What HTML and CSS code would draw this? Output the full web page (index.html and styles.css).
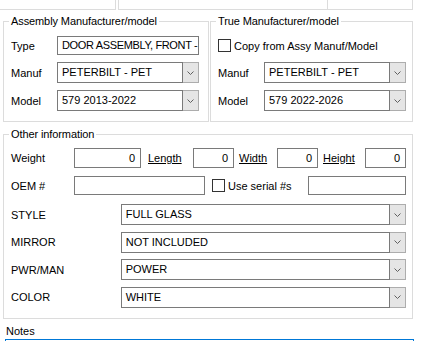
FILE: index.html
```html
<!DOCTYPE html>
<html>
<head>
	<meta charset="UTF-8">
	<title>Part details</title>
	<link rel="stylesheet" href="styles.css">
</head>
<body>
	<!--bottom of the panels above-->
	<div class="top">
		<div class="top-cell top-a"></div>
		<div class="top-cell top-b"></div>
		<div class="top-cell top-c"></div>
	</div>

	<div class="pair">
		<fieldset class="grp grp-left">
			<legend>Assembly Manufacturer/model</legend>
			<div class="form">
				<span class="lbl">Type</span>
				<div class="tb tb-type">DOOR ASSEMBLY, FRONT -</div>
				<span class="lbl">Manuf</span>
				<div class="combo"><span class="val">PETERBILT - PET</span><span class="btn"><svg width="7" height="4" viewBox="0 0 7 4"><polyline points="0.5,0.5 3.5,3.5 6.5,0.5" /></svg></span></div>
				<span class="lbl">Model</span>
				<div class="combo"><span class="val">579 2013-2022</span><span class="btn"><svg width="7" height="4" viewBox="0 0 7 4"><polyline points="0.5,0.5 3.5,3.5 6.5,0.5" /></svg></span></div>
			</div>
		</fieldset>

		<fieldset class="grp grp-right">
			<legend>True Manufacturer/model</legend>
			<div class="form">
				<label class="chk-line wide"><span class="chk"></span>Copy from Assy Manuf/Model</label>
				<span class="lbl">Manuf</span>
				<div class="combo"><span class="val">PETERBILT - PET</span><span class="btn"><svg width="7" height="4" viewBox="0 0 7 4"><polyline points="0.5,0.5 3.5,3.5 6.5,0.5" /></svg></span></div>
				<span class="lbl">Model</span>
				<div class="combo"><span class="val">579 2022-2026</span><span class="btn"><svg width="7" height="4" viewBox="0 0 7 4"><polyline points="0.5,0.5 3.5,3.5 6.5,0.5" /></svg></span></div>
			</div>
		</fieldset>
	</div>

	<fieldset class="grp grp-other">
		<legend>Other information</legend>
		<div class="dims">
			<span class="lbl">Weight</span>
			<div class="tb num">0</div>
			<a class="lnk lnk-len">Length</a>
			<div class="tb num">0</div>
			<a class="lnk">Width</a>
			<div class="tb num">0</div>
			<a class="lnk">Height</a>
			<div class="tb num">0</div>
		</div>
		<div class="oem">
			<span class="lbl">OEM #</span>
			<div class="tb tb-oem"></div>
			<label class="chk-line serial"><span class="chk"></span>Use serial #s</label>
			<div class="tb tb-serial"></div>
		</div>
		<div class="attr">
			<span class="lbl">STYLE</span>
			<div class="combo"><span class="val">FULL GLASS</span><span class="btn"><svg width="7" height="4" viewBox="0 0 7 4"><polyline points="0.5,0.5 3.5,3.5 6.5,0.5" /></svg></span></div>
		</div>
		<div class="attr">
			<span class="lbl">MIRROR</span>
			<div class="combo"><span class="val">NOT INCLUDED</span><span class="btn"><svg width="7" height="4" viewBox="0 0 7 4"><polyline points="0.5,0.5 3.5,3.5 6.5,0.5" /></svg></span></div>
		</div>
		<div class="attr">
			<span class="lbl">PWR/MAN</span>
			<div class="combo"><span class="val">POWER</span><span class="btn"><svg width="7" height="4" viewBox="0 0 7 4"><polyline points="0.5,0.5 3.5,3.5 6.5,0.5" /></svg></span></div>
		</div>
		<div class="attr">
			<span class="lbl">COLOR</span>
			<div class="combo"><span class="val">WHITE</span><span class="btn"><svg width="7" height="4" viewBox="0 0 7 4"><polyline points="0.5,0.5 3.5,3.5 6.5,0.5" /></svg></span></div>
		</div>
	</fieldset>

	<!--notes-->
	<div class="notes-lbl">Notes</div>
	<div class="notes"><span class="caret"></span></div>
</body>
</html>
```

FILE: styles.css
```css
* {
	margin: 0;
	padding: 0;
	box-sizing: border-box;
}

body {
	width: 422px;
	height: 341px;
	overflow: hidden;
	background: #fff;
	color: #000;
	font-family: "Liberation Sans", Arial, sans-serif;
	font-size: 11px;
	line-height: 14px;
}

/* panels above, only their bottom is visible */
.top {
	display: flex;
	height: 10px;
}

.top-cell {
	border-bottom: 1px solid #dcdcdc;
}

.top-a {
	width: 116px;
	border-right: 1px solid #dcdcdc;
}

.top-b {
	width: 210px;
	margin-left: 2px;
	border-left: 1px solid #dcdcdc;
	border-right: 1px solid #dcdcdc;
}

.top-c {
	width: 85px;
	border-right: 1px solid #dcdcdc;
}

/* group boxes */
.grp {
	border: 1px solid #dcdcdc;
	min-width: 0;
	padding: 8px 9px 10px 7px;
}

.grp legend {
	padding: 0 2px;
	margin-left: -2px;
	line-height: 14px;
	letter-spacing: -0.1px;
}

.pair {
	display: flex;
	gap: 1px;
	margin: 4px 0 0 3px;
}

.grp-left {
	width: 206px;
}

.grp-right {
	width: 203px;
}

.form {
	display: grid;
	grid-template-columns: 46px 142px;
	grid-template-rows: 19px 21px 21px;
	row-gap: 7px;
	align-items: center;
}

.wide {
	grid-column: 1 / 3;
}

.lbl {
	white-space: nowrap;
}

/* text boxes */
.tb {
	height: 19px;
	border: 1px solid #7a7a7a;
	background: #fff;
	padding: 0 4px;
	line-height: 17px;
	white-space: nowrap;
	overflow: hidden;
}

.tb-type {
	padding-left: 4px;
	letter-spacing: -0.35px;
}

.num {
	height: 20px;
	line-height: 18px;
	text-align: right;
	padding-right: 5px;
}

/* combo boxes */
.combo {
	display: flex;
	height: 21px;
}

.combo .val {
	flex: 1;
	border: 1px solid #7a7a7a;
	padding-left: 4px;
	line-height: 19px;
	white-space: nowrap;
	overflow: hidden;
}

.combo .btn {
	width: 16px;
	border: 1px solid #adadad;
	border-left: none;
	background: #e5e5e5;
	display: flex;
	align-items: center;
	justify-content: center;
}

.combo .btn svg {
	fill: none;
	stroke: #606060;
	stroke-width: 1;
}

/* check boxes */
.chk-line {
	display: flex;
	align-items: center;
	white-space: nowrap;
}

.chk {
	width: 13px;
	height: 13px;
	border: 1px solid #333;
	background: #fff;
	margin-right: 3px;
}

/* other information */
.grp-other {
	width: 410px;
	margin: 5px 0 0 3px;
	padding: 7px 6px 10px 7px;
}

.dims {
	display: grid;
	grid-template-columns: 63px 67px 52px 41px 43px 41px 47px 41px;
	align-items: center;
	height: 20px;
}

.lnk {
	color: #000;
	text-decoration: underline;
	padding-left: 5px;
}

.lnk-len {
	padding-left: 7px;
}

.oem {
	display: flex;
	align-items: center;
	height: 19px;
	margin-top: 8px;
}

.oem .lbl {
	width: 63px;
}

.tb-oem {
	width: 131px;
}

.serial {
	margin-left: 7px;
}

.tb-serial {
	width: 98px;
	margin-left: auto;
}

.attr {
	display: flex;
	align-items: center;
	margin-top: 6.5px;
}

.oem + .attr {
	margin-top: 9px;
}

.attr .lbl {
	width: 110px;
}

.attr .combo {
	width: 286px;
}

/* notes */
.notes-lbl {
	margin: 5px 0 1px 6px;
}

.notes {
	margin-left: 5px;
	width: 409px;
	height: 30px;
	border: 1px solid #0078d7;
	padding: 3px 0 0 3px;
}

.caret {
	display: block;
	width: 1px;
	height: 14px;
	background: #000;
}
```
